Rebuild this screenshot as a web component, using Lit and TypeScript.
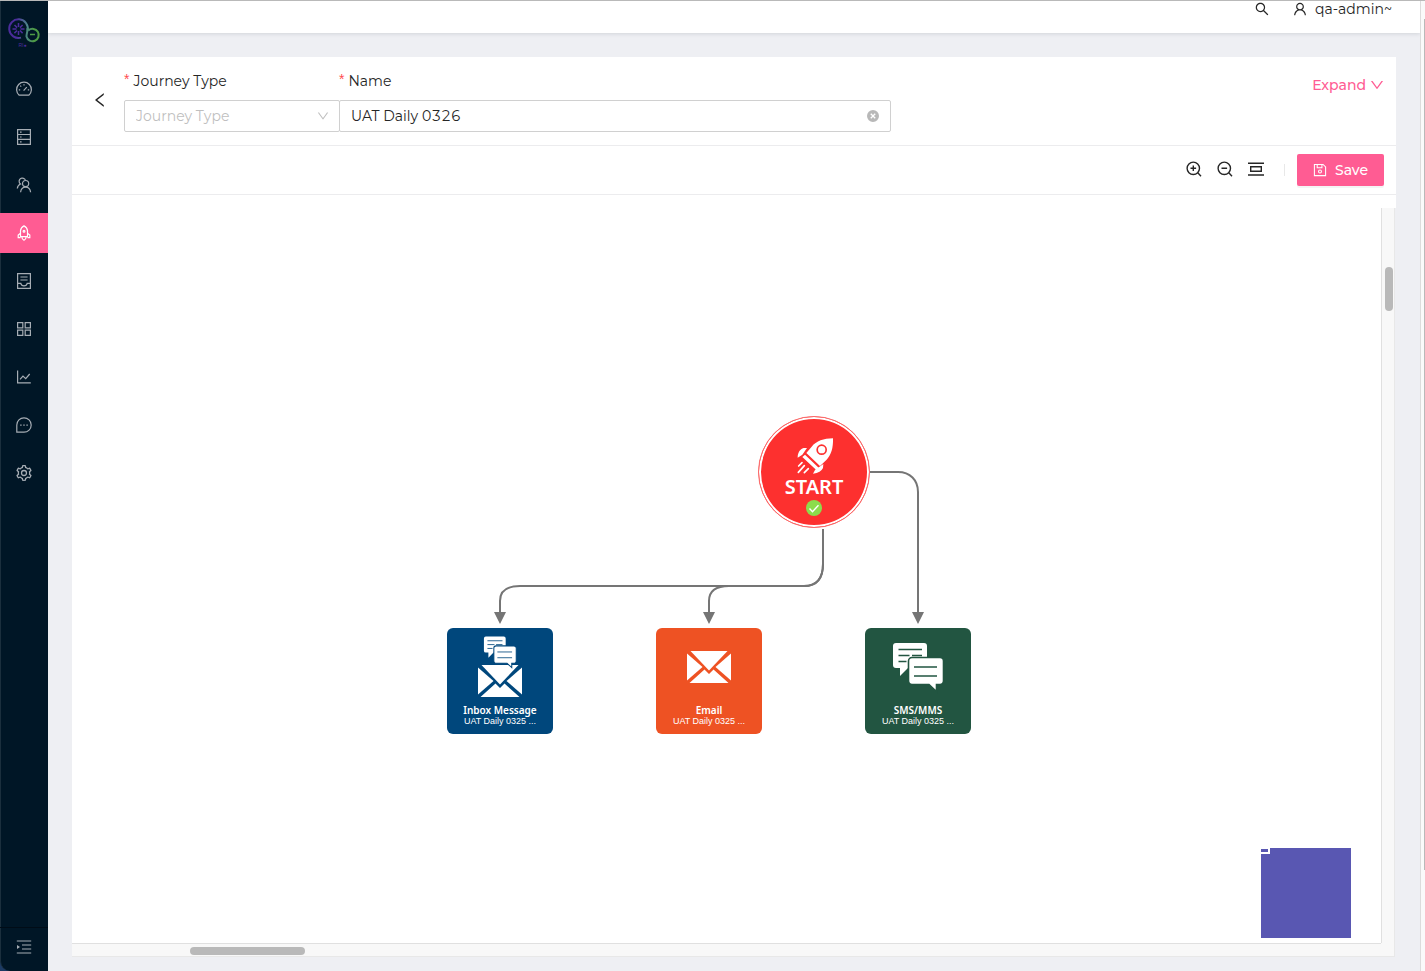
import { LitElement, html, svg, css, nothing } from "lit";
import { customElement, property } from "lit/decorators.js";
import { classMap } from "lit/directives/class-map.js";

const filled: Record<string, unknown> = {
  search: svg`<path d="M909.6 854.5L649.9 594.8C690.2 542.7 712 479 712 412c0-80.2-31.3-155.4-87.9-212.1-56.6-56.7-132-87.9-212.1-87.9s-155.5 31.3-212.1 87.9C143.2 256.5 112 331.8 112 412c0 80.1 31.3 155.5 87.9 212.1C256.5 680.8 331.8 712 412 712c67 0 130.6-21.8 182.7-62l259.7 259.6a8.2 8.2 0 0 0 11.6 0l43.6-43.5a8.2 8.2 0 0 0 0-11.6zM570.4 570.4C528 612.7 471.8 636 412 636s-116-23.3-158.4-65.6C211.3 528 188 471.8 188 412s23.3-116.1 65.6-158.4C296 211.3 352.2 188 412 188s116.1 23.2 158.4 65.6S636 352.2 636 412s-23.3 116.1-65.6 158.4z"/>`,
  user: svg`<path d="M858.5 763.6a374 374 0 0 0-80.6-119.5 375.63 375.63 0 0 0-119.5-80.6c-.4-.2-.8-.3-1.2-.5C719.5 518 760 444.7 760 362c0-137-111-248-248-248S264 225 264 362c0 82.7 40.5 156 102.8 201.1-.4.2-.8.3-1.2.5-44.8 18.9-85 46-119.5 80.6a375.63 375.63 0 0 0-80.6 119.5A371.7 371.7 0 0 0 136 901.8a8 8 0 0 0 8 8.2h60c4.4 0 7.9-3.5 8-7.8 2-77.2 33-149.5 87.8-204.3 56.7-56.7 132-87.9 212.2-87.9s155.5 31.2 212.2 87.9C779 752.7 810 825 812 902.2c.1 4.4 3.6 7.8 8 7.8h60a8 8 0 0 0 8-8.2c-1-47.8-10.9-94.3-29.5-138.2zM512 534c-45.9 0-89.1-17.9-121.6-50.4S340 407.9 340 362c0-45.9 17.9-89.1 50.4-121.6S466.1 190 512 190s89.1 17.9 121.6 50.4S684 316.1 684 362c0 45.9-17.9 89.1-50.4 121.6S557.9 534 512 534z"/>`,
  down: svg`<path d="M884 256h-75c-5.1 0-9.9 2.5-12.9 6.6L512 654.2 227.9 262.6c-3-4.1-7.8-6.6-12.9-6.6h-75c-6.5 0-10.3 7.4-6.5 12.7l352.6 486.1c12.8 17.6 39 17.6 51.7 0l352.6-486.1c3.9-5.3.1-12.7-6.4-12.7z"/>`,
  left: svg`<path d="M724 218.3V141c0-6.7-7.7-10.4-12.9-6.3L260.3 486.8a31.86 31.86 0 0 0 0 50.3l450.8 352.1c5.3 4.1 12.9.4 12.9-6.3v-77.3c0-4.9-2.3-9.6-6.1-12.6l-360-281 360-281.1c3.8-3 6.1-7.7 6.1-12.6z"/>`,
  clear: svg`<path fill-rule="evenodd" d="M512 64a448 448 0 1 1 0 896 448 448 0 0 1 0-896zM380 310l-70 70 132 132-132 132 70 70 132-132 132 132 70-70-132-132 132-132-70-70-132 132z"/>`,
  setting: svg`<path fill-rule="evenodd" d="M924.8 625.7l-65.5-56c3.1-19 4.7-38.4 4.7-57.8s-1.6-38.8-4.7-57.8l65.5-56a32.03 32.03 0 0 0 9.3-35.2l-.9-2.6a443.74 443.74 0 0 0-79.7-137.9l-1.8-2.1a32.12 32.12 0 0 0-35.1-9.5l-81.3 28.9c-30-24.6-63.5-44-99.7-57.6l-15.7-85a32.05 32.05 0 0 0-25.8-25.7l-2.7-.5c-52.1-9.4-106.9-9.4-159 0l-2.7.5a32.05 32.05 0 0 0-25.8 25.7l-15.8 85.4a351.86 351.86 0 0 0-99 57.4l-81.9-29.1a32 32 0 0 0-35.1 9.5l-1.8 2.1a446.02 446.02 0 0 0-79.7 137.9l-.9 2.6c-4.5 12.5-.8 26.5 9.3 35.2l66.3 56.6c-3.1 18.8-4.6 38-4.6 57.1 0 19.2 1.5 38.4 4.6 57.1L99 625.5a32.03 32.03 0 0 0-9.3 35.2l.9 2.6c18.1 50.4 44.9 96.9 79.7 137.9l1.8 2.1a32.12 32.12 0 0 0 35.1 9.5l81.9-29.1c29.8 24.5 63.1 43.9 99 57.4l15.8 85.4a32.05 32.05 0 0 0 25.8 25.7l2.7.5a449.4 449.4 0 0 0 159 0l2.7-.5a32.05 32.05 0 0 0 25.8-25.7l15.7-85a350 350 0 0 0 99.7-57.6l81.3 28.9a32 32 0 0 0 35.1-9.5l1.8-2.1c34.8-41.1 61.6-87.5 79.7-137.9l.9-2.6c4.5-12.3.8-26.3-9.3-35zM788.3 465.9c2.5 15.1 3.8 30.6 3.8 46.1s-1.3 31-3.8 46.1l-6.6 40.1 74.7 63.9a370.03 370.03 0 0 1-42.6 73.6L721 702.8l-31.4 25.8c-23.9 19.6-50.5 35-79.3 45.8l-38.1 14.3-17.9 97a377.5 377.5 0 0 1-85 0l-17.9-97.2-37.8-14.5c-28.5-10.8-55-26.2-78.7-45.7l-31.4-25.9-93.4 33.2c-17-22.9-31.2-47.6-42.6-73.6l75.5-64.5-6.5-40c-2.4-14.9-3.7-30.3-3.7-45.5 0-15.3 1.2-30.6 3.7-45.5l6.5-40-75.5-64.5c11.3-26.1 25.6-50.7 42.6-73.6l93.4 33.2 31.4-25.9c23.7-19.5 50.2-34.9 78.7-45.7l37.9-14.3 17.9-97.2c28.1-3.2 56.8-3.2 85 0l17.9 97 38.1 14.3c28.7 10.8 55.4 26.2 79.3 45.8l31.4 25.8 92.8-32.9c17 22.9 31.2 47.6 42.6 73.6L781.8 426l6.5 39.9z"/><circle cx="512" cy="512" r="140" fill="none" stroke="currentColor" stroke-width="72"/>`,
};

const stroked: Record<string, unknown> = {
  dashboard: svg`<path d="M3.2 14.2A7.4 7.4 0 1 1 12.8 14.2z"/><path d="M7.6 9.600l3.200-3.400M8 3.200v1.400M4.300 4.700l.9.9M2.800 8.800h1.400M13.200 8.800h-1.400"/>`,
  database: svg`<path d="M1.6.6h12.8v14.8H1.6zM1.6 5.5h12.8M1.6 10.4h12.8"/><path d="M4 3.1h1.6M4 8h1.6M4 12.9h1.6"/>`,
  team: svg`<circle cx="9.6" cy="6.6" r="3.1"/><path d="M4.6 15.2c.3-3 2.4-5.1 5-5.1s4.700 2.100 5 5.100M8.300 1.700A3 3 0 1 0 4.500 7C2.600 7.800 1.500 9.500 1.300 11.500M8.300 1.700c.5.3.9.7 1.100 1.200"/>`,
  rocket: svg`<path d="M4.500 11.600V5.600C4.700 3.600 6 2 8 .9c2 1.100 3.300 2.700 3.500 4.700v6zM4.500 8.200L2.200 10v2.600h2.300M11.500 8.200L13.800 10v2.600h-2.300M5.900 12c0 1.800.7 2.600 2.100 3.300 1.400-.7 2.100-1.500 2.100-3.300"/><circle cx="8" cy="6.200" r=".9"/>`,
  inbox: svg`<path d="M1.600.6h12.800v14.800H1.600zM4.400 4h7.200M4.400 7h7.200M1.600 10.400h3.200c.3 1.600 1.500 2.500 3.200 2.500s2.900-.9 3.200-2.500h3.200"/>`,
  appstore: svg`<path d="M1.600 1.600h5.200v5.200H1.600zM9.200 1.600h5.200v5.200H9.200zM1.600 9.200h5.200v5.200H1.600zM9.200 9.200h5.200v5.200H9.200z"/>`,
  chart: svg`<path d="M1.600 1.600v12.200h13.200"/><path d="M4 10.400l3-3.300 2.700 2.500 4-4.600"/>`,
  message: svg`<path d="M.8 15.200V8A7.200 7.200 0 1 1 8 15.200z"/><path d="M4.200 8.100h1.400M7.300 8.100h1.400M10.400 8.100h1.400" stroke-width="1.400"/>`,
  unfold: svg`<path d="M.8 2h14.400M6 6h9.200M6 10h9.200M.8 14h14.400"/><path d="M1 6v4l3-2z" fill="currentColor" stroke="none"/>`,
  zoomIn: svg`<circle cx="7.300" cy="7.300" r="6.200"/><path d="M11.800 11.800L15 15.200M4.500 7.300h5.600M7.300 4.500v5.600"/>`,
  zoomOut: svg`<circle cx="7.300" cy="7.300" r="6.200"/><path d="M11.800 11.800L15 15.200M4.500 7.300h5.600"/>`,
  fit: svg`<path d="M0 2.200h16M0 14h16M2.700 5.700h10.600v4.600H2.700z"/>`,
  save: svg`<path d="M1.600 1.600h9.900l2.900 2.900v9.900H1.600zM4.800 1.600v3.800h5.400V1.600"/><circle cx="8" cy="9.800" r="1.700"/>`,
};

@customElement("app-icon")
class AppIcon extends LitElement {
  @property() name = "";
  static styles = css`
    :host { display: inline-flex; width: 16px; height: 16px; flex: none; }
    svg { width: 100%; height: 100%; overflow: visible; }
    .line { fill: none; stroke: currentColor; stroke-width: var(--icon-stroke, 1.2); }
    .solid { fill: currentColor; }
  `;
  render() {
    return this.name in filled
      ? html`<svg class="solid" viewBox="64 64 896 896" aria-hidden="true">${filled[this.name]}</svg>`
      : html`<svg class="line" viewBox="0 0 16 16" aria-hidden="true">${stroked[this.name] ?? nothing}</svg>`;
  }
}

const envelope = svg`
  <path d="M34.500 23h37L53 42.500z"/>
  <path d="M31 25.500L46.500 39 31 52.500z"/>
  <path d="M75 25.500L59.500 39 75 52.500z"/>
  <path d="M33.500 55L48.500 41.500 53 46l4.500-4.500L72.500 55z"/>`;

const bubbles = (ground: string) => svg`
  <path d="M31 15h28a3 3 0 0 1 3 3v19a3 3 0 0 1-3 3H43l-8 8v-8h-4a3 3 0 0 1-3-3V18a3 3 0 0 1 3-3z"/>
  <path fill="none" stroke=${ground} stroke-width="1.300" d="M33.500 21.500H57M33.500 27.500h11M47 27.500h10M33.500 33.500h8"/>
  <path stroke=${ground} stroke-width="1.600" d="M47 29.500h28a3.500 3.500 0 0 1 3.500 3.500v20a3.500 3.500 0 0 1-3.500 3.500h-3.500v7L64 56.500H47a3.500 3.500 0 0 1-3.500-3.500V33a3.500 3.500 0 0 1 3.500-3.500z"/>
  <path fill="none" stroke=${ground} stroke-width="1.300" d="M49 39h23M49 48h23"/>`;

const BLUE = "#00477c";
const GREEN = "#225541";

const steps = [
  {
    kind: "inbox", title: "Inbox Message", note: "UAT Daily 0325 ...",
    art: svg`<g transform="translate(0 14)">${envelope}</g><g transform="translate(19 -1) scale(.64)">${bubbles(BLUE)}</g>`,
  },
  { kind: "email", title: "Email", note: "UAT Daily 0325 ...", art: envelope },
  { kind: "sms", title: "SMS/MMS", note: "UAT Daily 0325 ...", art: bubbles(GREEN) },
];

const menu = [
  ["dashboard", "Dashboard"], ["database", "Data"], ["team", "Audience"],
  ["rocket", "Journeys"], ["inbox", "Content"], ["appstore", "Apps"],
  ["chart", "Reports"], ["message", "Messages"], ["setting", "Settings"],
];

@customElement("app-root")
class AppRoot extends LitElement {
  static styles = css`
    * { box-sizing: border-box; }
    :host {
      display: flex; height: 100vh; overflow: hidden;
      border-top: 1px solid #b9b9b9; background: #eeeff3; color: #262626;
      font: 14px/20px Montserrat, Inter, "Liberation Sans", sans-serif;
      font-variant-numeric: tabular-nums;
      box-sizing: border-box;
    }
    button { border: 0; padding: 0; background: none; color: inherit; font: inherit; cursor: pointer; display: inline-flex; align-items: center; }
    .rail { flex: none; width: 48px; background: #1c3a63; display: flex; }
    .side { flex: 1; display: flex; flex-direction: column; background: #001626; border-left: 1px solid #1b2f3d; border-bottom-left-radius: 10px; }
    .logo { width: 36px; height: 36px; margin: 14px 0 0 5px; }
    .logo text { font: 5px "Liberation Sans", sans-serif; fill: #4b2c9b; }
    .menu { list-style: none; margin: 18px 0 0 -1px; padding: 0; display: flex; flex-direction: column; gap: 8px; }
    .menu a { display: flex; height: 40px; align-items: center; justify-content: center; color: #a6adb4; }
    .menu .current { background: #ff5c93; color: #fff; }
    .fold { margin: auto 0 0 -1px; height: 44px; padding-bottom: 6px; justify-content: center; color: #a6adb4; border-top: 1px solid #000c17; }
    .main { flex: 1; min-width: 0; display: flex; flex-direction: column; }
    .top { flex: none; height: 32px; background: #fff; box-shadow: 0 1px 4px rgba(0, 21, 41, .12); display: flex; justify-content: flex-end; align-items: flex-start; gap: 24px; padding-right: 28px; line-height: 16px; }
    .top button { height: 16px; gap: 8px; }
    .small { width: 14px; height: 14px; }
    .card { flex: 1; min-height: 0; margin: 24px 24px 14px; display: flex; flex-direction: column; }
    .form { display: flex; background: #fff; height: 89px; border-bottom: 1px solid #ececee; padding: 14px 12px 0 20px; align-items: flex-start; }
    .back { margin: 21px 16px 0 0; }
    .fields { display: flex; flex: 1; }
    .field { display: flex; flex-direction: column; gap: 9px; position: relative; }
    .field label { display: flex; gap: 4px; }
    .field label::before { content: "*"; color: #ff4d4f; font: 14px/17px "Liberation Sans", sans-serif; }
    .type { flex: 0 1 216px; }
    .name { flex: 0 1 552px; margin-left: -1px; }
    .type select, .name input { width: 100%; height: 32px; border: 1px solid #d0d0d0; border-radius: 2px; background: #fff; padding: 0 11px; font: inherit; font-variant-numeric: tabular-nums; color: #262626; appearance: none; outline: none; }
    .type select { color: #bfbfbf; }
    .type app-icon { position: absolute; right: 11px; bottom: 10px; width: 12px; height: 12px; color: #bfbfbf; }
    .clear { position: absolute; right: 12px; bottom: 10px; color: #b8b8b8; }
    .clear app-icon { width: 12px; height: 12px; }
    .expand { color: #ff5c93; gap: 4px; margin-top: 4px; font-weight: 500; }
    .expand app-icon { width: 14px; height: 14px; }
    .tools { background: #fff; height: 49px; flex: none; border-bottom: 1px solid #ececee; padding: 0 12px; display: flex; align-items: center; justify-content: flex-end; gap: 12px; }
    .group { display: flex; gap: 15px; padding: 0 8px 2px 0; --icon-stroke: 1.4; }
    .rule { width: 1px; height: 12px; background: #e8e8e8; }
    .save { width: 87px; height: 32px; justify-content: center; gap: 8px; background: #ff5c93; color: #fff; border-radius: 2px; box-shadow: 0 2px 0 rgba(0, 0, 0, .045); font-weight: 500; }
    .save app-icon { width: 14px; height: 14px; }
    .gap { flex: none; height: 13px; background: #fff; }
    .stage { flex: 1; min-height: 0; margin-right: 1px; display: grid; grid-template: 1fr 14px / 1fr 14px; background: #f8f8f8; }
    .canvas { position: relative; overflow: hidden; background: #fff; }
    .edges { display: block; width: 100%; height: 100%; fill: none; stroke: #757575; stroke-width: 2; }
    .edges .tip { fill: #757575; stroke: none; }
    .vbar { border-left: 1px solid #e0e0e0; border-right: 1px solid #e8e8e8; padding: 59px 0 0 3px; }
    .vbar i { display: block; width: 8px; height: 44px; border-radius: 4px; background: #b9b9b9; }
    .hbar { border-top: 1px solid #e0e0e0; border-bottom: 1px solid #e8e8e8; padding: 3px 0 0 118px; }
    .hbar i { display: block; width: 115px; height: 8px; border-radius: 4px; background: #b9b9b9; }
    .corner { border-right: 1px solid #e8e8e8; border-bottom: 1px solid #e8e8e8; }
    .node { position: absolute; display: flex; flex-direction: column; align-items: center; color: #fff; }
    .start { left: 686px; top: 208px; width: 112px; height: 112px; border-radius: 50%; border: 1px solid #fb6a6a; background: #fd302f; box-shadow: inset 0 0 0 2px #fff; padding-top: 21px; font: 600 20px/26px "Noto Sans", sans-serif; }
    .start .craft { width: 36px; height: 36px; flex: none; overflow: visible; }
    .start .ok { width: 16px; height: 16px; flex: none; }
    .step { top: 420px; width: 106px; height: 106px; border-radius: 6px; padding-bottom: 7px; font: 9px/11px "Liberation Sans", sans-serif; }
    .step svg { width: 106px; height: 76px; flex: none; fill: #fff; }
    .step b { font: 600 10px/12px "Noto Sans", sans-serif; }
    .inbox { left: 375px; background: #00477c; }
    .email { left: 584px; background: #ee5223; }
    .sms { left: 793px; background: #225541; }
    .map { position: absolute; right: 30px; bottom: 5px; width: 90px; height: 90px; background: #5957b2; }
    .view { width: 9px; height: 6px; border: 2px solid #fff; border-width: 1px 2px 2px 0; }
    .page-bar { flex: none; width: 5px; background: #fafafa; border-left: 1px solid #dcdcdc; padding: 18px 0 0 3px; }
    .page-bar i { display: block; height: 851px; background: #b9b9b9; }
  `;

  render() {
    return html`
      <div class="rail">
        <nav class="side" aria-label="Main">
          <svg class="logo" viewBox="6 15 36 36" aria-hidden="true">
            <defs>
              <linearGradient id="a" x1="0" x2="1"><stop offset=".4" stop-color="#4b2c9b"/><stop offset="1" stop-color="#4e8a8c"/></linearGradient>
              <linearGradient id="b" x1="0" x2="1"><stop offset="0" stop-color="#4a8580"/><stop offset=".6" stop-color="#4e9b45"/></linearGradient>
            </defs>
            <g fill="none" stroke-width="2">
              <path stroke="url(#a)" d="M21 37.600A9.300 9.300 0 1 1 27.500 31"/>
              <path stroke="url(#b)" d="M28.500 30.300A6.200 6.200 0 1 1 26.500 36.500C26.300 34 27.800 31.500 27.600 28"/>
              <path stroke="#4b2c9b" stroke-width="1.500" d="M18.500 23v4M18.500 31v4M12.500 29h4M20.500 29h4M14.500 25l2.600 2.600M20 30.500l2.600 2.600M22.600 25L20 27.600M17 30.500l-2.600 2.600"/>
              <path stroke="#4e9b45" stroke-width="1.500" d="M30 34.500h5"/>
            </g>
            <text x="18.500" y="46.500">RI●</text>
          </svg>
          <ul class="menu">
            ${menu.map(([icon, label]) => html`<li>
              <a href="#" aria-label=${label} class=${classMap({ current: icon === "rocket" })}><app-icon name=${icon}></app-icon></a>
            </li>`)}
          </ul>
          <button class="fold" aria-label="Expand menu"><app-icon name="unfold"></app-icon></button>
        </nav>
      </div>
      <div class="main">
        <header class="top">
          <button aria-label="Search"><app-icon class="small" name="search"></app-icon></button>
          <button><app-icon class="small" name="user"></app-icon>qa-admin~</button>
        </header>
        <main class="card">
          <form class="form">
            <button type="button" class="back" aria-label="Back"><app-icon name="left"></app-icon></button>
            <div class="fields">
              <div class="field type">
                <label for="type">Journey Type</label>
                <select id="type"><option>Journey Type</option></select>
                <app-icon name="down"></app-icon>
              </div>
              <div class="field name">
                <label for="name">Name</label>
                <input id="name" type="text" value="UAT Daily 0326" />
                <button type="button" class="clear" aria-label="Clear"><app-icon name="clear"></app-icon></button>
              </div>
            </div>
            <button type="button" class="expand">Expand<app-icon name="down"></app-icon></button>
          </form>
          <div class="tools">
            <div class="group">
              <button aria-label="Zoom in"><app-icon name="zoomIn"></app-icon></button>
              <button aria-label="Zoom out"><app-icon name="zoomOut"></app-icon></button>
              <button aria-label="Fit"><app-icon name="fit"></app-icon></button>
            </div>
            <span class="rule"></span>
            <button class="save"><app-icon name="save"></app-icon>Save</button>
          </div>
          <div class="gap"></div>
          <div class="stage">
            <div class="canvas">
              <svg class="edges" aria-hidden="true">
                <path d="M751 321V356C751 370 745 378 732 378H448C434 378 428 384 428 393V406"/>
                <path d="M751 321V356C751 370 745 378 732 378H657C643 378 637 384 637 393V406"/>
                <path d="M798 264H826C838 264 846 272 846 284V406"/>
                <path class="tip" d="M422 404h12l-6 12zM631 404h12l-6 12zM840 404h12l-6 12z"/>
              </svg>
              <div class="node start">
                <svg class="craft" viewBox="168 114 108 108" aria-hidden="true" fill="#fff">
                  <path fill-rule="evenodd" d="M279 115c1 28-5 50-20 65l-19 18-41-39 16-19c14-17 36-25 64-25zM245 133a16 16 0 1 0 0 32 16 16 0 0 0 0-32z"/>
                  <circle cx="245" cy="149" r="11"/>
                  <path d="M195 164l41 39-8 6-41-38zM201 144l-14 20-14 9c0-15 7-26 18-29zM250 192l-1 12c-4 9-14 15-30 17l6-11z"/>
                  <path fill="none" stroke="#fff" stroke-width="5" stroke-linecap="round" d="M186 188l-10 10M193 197l-18 20M205 206l-12 12"/>
                </svg>
                START
                <svg class="ok" viewBox="0 0 16 16" aria-hidden="true"><circle cx="8" cy="8" r="8" fill="#8cdc4c"/><path d="M3.500 8.500l3 3.200 6-6.500" fill="none" stroke="#fff" stroke-width="1.400"/></svg>
              </div>
              ${steps.map((s) => html`<div class="node step ${s.kind}">
                <svg viewBox="0 0 106 76" aria-hidden="true">${s.art}</svg>
                <b>${s.title}</b><span>${s.note}</span>
              </div>`)}
              <div class="map"><div class="view"></div></div>
            </div>
            <div class="vbar"><i></i></div>
            <div class="hbar"><i></i></div>
            <div class="corner"></div>
          </div>
        </main>
      </div>
      <div class="page-bar"><i></i></div>
    `;
  }
}
